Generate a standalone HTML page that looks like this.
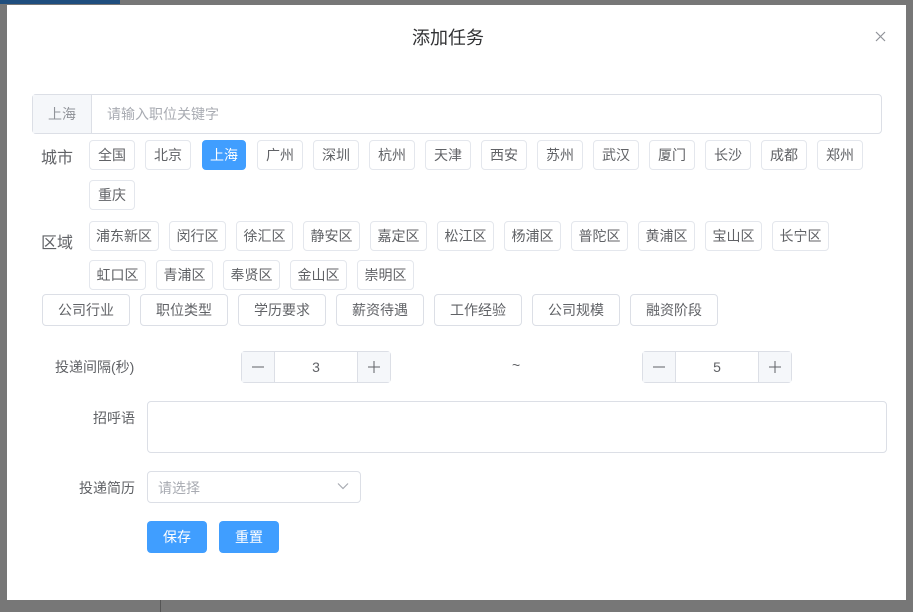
<!DOCTYPE html>
<html><head><meta charset="utf-8"><style>
*{box-sizing:border-box;margin:0;padding:0}
body{width:913px;height:612px;background:#777;position:relative;overflow:hidden;font-family:"Liberation Sans","Noto Sans CJK SC",sans-serif;color:#606266}
.a{position:absolute}
.dlg{left:7px;top:5px;width:899px;height:595px;background:#fff}
.tag{position:absolute;height:30px;border:1px solid #e4e7ed;border-radius:4px;font-size:14px;line-height:28px;text-align:center;color:#606266;background:#fff}
.on{background:#409eff;border-color:#409eff;color:#fff}
.btn{position:absolute;height:32px;border:1px solid #dcdfe6;border-radius:4px;font-size:14px;line-height:30px;text-align:center;color:#606266;width:88px;top:294px}
.lbl{position:absolute;font-size:14px;color:#606266}
.num{position:absolute;height:32px;width:150px;border:1px solid #dcdfe6;border-radius:4px;top:351px;font-size:14px}
.num .m,.num .p{position:absolute;top:0;width:33px;height:30px;background:#f5f7fa}
.num .m{left:0;border-right:1px solid #dcdfe6}.num .p{right:0;border-left:1px solid #dcdfe6}
.num svg{position:absolute;left:10px;top:9px}
.num .v{position:absolute;left:33px;right:33px;text-align:center;line-height:30px;color:#606266}
.pb{position:absolute;top:521px;height:32px;width:60px;background:#409eff;border-radius:4px;color:#fff;font-size:14px;line-height:32px;text-align:center}
</style></head><body>
<div class="a" style="left:0;top:0;width:120px;height:4px;background:#1f4e7e"></div>
<div class="a" style="left:160px;top:600px;width:1px;height:12px;background:#555"></div>
<div class="a dlg"></div>
<div class="a" style="left:412px;top:24px;font-size:18px;color:#303133">添加任务</div>
<svg class="a" style="left:875px;top:31px" width="11" height="11" viewBox="0 0 11 11"><path d="M1 1L10 10M10 1L1 10" stroke="#909399" stroke-width="1.2"/></svg>
<div class="a" style="left:32px;top:94px;width:850px;height:40px;border:1px solid #dcdfe6;border-radius:4px"></div>
<div class="a" style="left:33px;top:95px;width:59px;height:38px;background:#f5f7fa;border-right:1px solid #dcdfe6;text-align:center;line-height:38px;font-size:14px;color:#909399">上海</div>
<div class="a" style="left:107px;top:95px;line-height:38px;font-size:14px;color:#a8abb2">请输入职位关键字</div>
<div class="lbl" style="left:41px;top:144px;font-size:16px">城市</div>
<div class="tag" style="left:89px;top:140px;width:46px">全国</div>
<div class="tag" style="left:145px;top:140px;width:46px">北京</div>
<div class="tag on" style="left:202px;top:140px;width:44px">上海</div>
<div class="tag" style="left:257px;top:140px;width:46px">广州</div>
<div class="tag" style="left:313px;top:140px;width:46px">深圳</div>
<div class="tag" style="left:369px;top:140px;width:46px">杭州</div>
<div class="tag" style="left:425px;top:140px;width:46px">天津</div>
<div class="tag" style="left:481px;top:140px;width:46px">西安</div>
<div class="tag" style="left:537px;top:140px;width:46px">苏州</div>
<div class="tag" style="left:593px;top:140px;width:46px">武汉</div>
<div class="tag" style="left:649px;top:140px;width:46px">厦门</div>
<div class="tag" style="left:705px;top:140px;width:46px">长沙</div>
<div class="tag" style="left:761px;top:140px;width:46px">成都</div>
<div class="tag" style="left:817px;top:140px;width:46px">郑州</div>
<div class="tag" style="left:89px;top:180px;width:46px">重庆</div>
<div class="lbl" style="left:41px;top:229px;font-size:16px">区域</div>
<div class="tag" style="left:89px;top:221px;width:70px">浦东新区</div>
<div class="tag" style="left:169px;top:221px;width:57px">闵行区</div>
<div class="tag" style="left:236px;top:221px;width:57px">徐汇区</div>
<div class="tag" style="left:303px;top:221px;width:57px">静安区</div>
<div class="tag" style="left:370px;top:221px;width:57px">嘉定区</div>
<div class="tag" style="left:437px;top:221px;width:57px">松江区</div>
<div class="tag" style="left:504px;top:221px;width:57px">杨浦区</div>
<div class="tag" style="left:571px;top:221px;width:57px">普陀区</div>
<div class="tag" style="left:638px;top:221px;width:57px">黄浦区</div>
<div class="tag" style="left:705px;top:221px;width:57px">宝山区</div>
<div class="tag" style="left:772px;top:221px;width:57px">长宁区</div>
<div class="tag" style="left:89px;top:260px;width:57px">虹口区</div>
<div class="tag" style="left:156px;top:260px;width:57px">青浦区</div>
<div class="tag" style="left:223px;top:260px;width:57px">奉贤区</div>
<div class="tag" style="left:290px;top:260px;width:57px">金山区</div>
<div class="tag" style="left:357px;top:260px;width:57px">崇明区</div>
<div class="btn" style="left:42px">公司行业</div>
<div class="btn" style="left:140px">职位类型</div>
<div class="btn" style="left:238px">学历要求</div>
<div class="btn" style="left:336px">薪资待遇</div>
<div class="btn" style="left:434px">工作经验</div>
<div class="btn" style="left:532px">公司规模</div>
<div class="btn" style="left:630px">融资阶段</div>
<div class="lbl" style="left:55px;top:357px">投递间隔(秒)</div>
<div class="num" style="left:241px"><div class="m"><svg width="12" height="12"><path d="M0 6H12" stroke="#606266" stroke-width="1"/></svg></div><div class="v">3</div><div class="p"><svg width="12" height="12"><path d="M0 6H12M6 0V12" stroke="#606266" stroke-width="1"/></svg></div></div>
<div class="lbl" style="left:512px;top:357px">~</div>
<div class="num" style="left:642px"><div class="m"><svg width="12" height="12"><path d="M0 6H12" stroke="#606266" stroke-width="1"/></svg></div><div class="v">5</div><div class="p"><svg width="12" height="12"><path d="M0 6H12M6 0V12" stroke="#606266" stroke-width="1"/></svg></div></div>
<div class="lbl" style="left:93px;top:408px">招呼语</div>
<div class="a" style="left:147px;top:401px;width:740px;height:52px;border:1px solid #dcdfe6;border-radius:4px"></div>
<div class="lbl" style="left:79px;top:478px">投递简历</div>
<div class="a" style="left:147px;top:471px;width:214px;height:32px;border:1px solid #dcdfe6;border-radius:4px"></div>
<div class="a" style="left:158px;top:478px;font-size:14px;color:#a8abb2">请选择</div>
<svg class="a" style="left:337px;top:482px" width="12" height="8" viewBox="0 0 12 8"><path d="M1 1.5L6 6.5L11 1.5" fill="none" stroke="#a8abb2" stroke-width="1.2"/></svg>
<div class="pb" style="left:147px">保存</div>
<div class="pb" style="left:219px">重置</div>
</body></html>
